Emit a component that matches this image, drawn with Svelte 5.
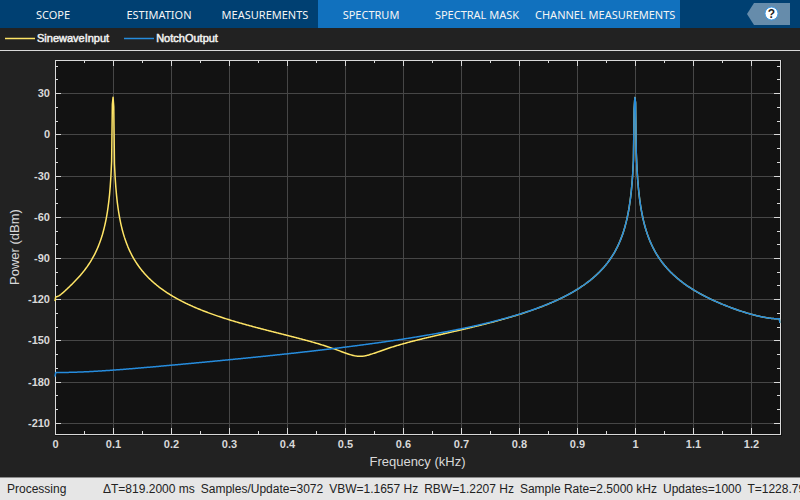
<script>
  const tabs = [
    { label: "SCOPE", contextual: false },
    { label: "ESTIMATION", contextual: false },
    { label: "MEASUREMENTS", contextual: false },
    { label: "SPECTRUM", contextual: true },
    { label: "SPECTRAL MASK", contextual: true },
    { label: "CHANNEL MEASUREMENTS", contextual: true },
  ];

  const stats = [
    "ΔT=819.2000 ms",
    "Samples/Update=3072",
    "VBW=1.1657 Hz",
    "RBW=1.2207 Hz",
    "Sample Rate=2.5000 kHz",
    "Updates=1000",
    "T=1228.7992",
  ];

  // spectrum settings, frequencies in kHz and levels in dBm
  const sampleRate = 2.5;
  const fftLength = 2048;
  const binWidth = sampleRate / fftLength;
  const peak = 27;
  const span = { min: 0, max: 1.25 };
  const range = { min: -218.1, max: 54.1 };

  const lowTone = { freq: 0.1, level: -171.3, phase: 26 };
  const highTone = { freq: 1, level: -167, phase: 42 };

  const channels = [
    { name: "SinewaveInput", kind: "input", tones: [lowTone, highTone] },
    { name: "NotchOutput", kind: "output", tones: [highTone] },
  ];

  // sidelobe envelope of the Hann window
  function kernel(offset) {
    const u = (Math.PI * offset) / sampleRate;
    return Math.cos(u) / Math.sin(u) ** 3;
  }

  function level(freq, tones) {
    let re = 0;
    let im = 0;
    for (const tone of tones) {
      // main lobe
      const bins = Math.abs(freq - tone.freq) / binWidth;
      if (bins < 1.5) return peak - 6 * bins ** 2;

      const gain = 10 ** (tone.level / 20);
      const phase = (tone.phase * Math.PI) / 180;
      const pos = kernel(freq - tone.freq);
      const neg = kernel(freq + tone.freq);
      re += gain * Math.cos(phase) * (pos + neg);
      im += gain * Math.sin(phase) * (pos - neg);
    }
    // DC and Nyquist are not doubled in a one-sided spectrum
    const edge = freq === 0 || freq === sampleRate / 2 ? 3 : 0;
    return 20 * Math.log10(Math.hypot(re, im)) - edge;
  }

  let chartWidth = $state(800);
  let chartHeight = $state(426);

  const left = 55;
  const top = 9;
  let right = $derived(chartWidth - 20);
  let bottom = $derived(chartHeight - 43);

  let x = $derived((f) => left + ((f - span.min) / (span.max - span.min)) * (right - left));
  let y = $derived((p) => top + ((range.max - p) / (range.max - range.min)) * (bottom - top));
  let snapX = $derived((f) => Math.round(x(f)) + 0.5);
  let snapY = $derived((p) => Math.round(y(p)) + 0.5);

  const xTicks = Array.from({ length: 25 }, (_, i) => ({ value: i / 20, major: i % 2 === 0 }));
  const yTicks = Array.from({ length: 27 }, (_, i) => 50 - i * 10).map((value) => ({
    value,
    major: value % 30 === 0,
  }));

  function trace(tones) {
    const points = [];
    for (let bin = 0; bin <= fftLength / 2; bin++) {
      const f = bin * binWidth;
      points.push(`${x(f).toFixed(2)},${y(level(f, tones)).toFixed(2)}`);
    }
    return points.join(" ");
  }
</script>

<main class="scope">
  <nav class="toolstrip">
    {#each tabs as tab}
      <button class="tab" class:contextual={tab.contextual}>{tab.label}</button>
    {/each}
    <button class="help" aria-label="Help">
      <svg width="43" height="22" viewBox="0 0 43 22">
        <path class="flag" d="M0 11 L7 0 H43 V22 H7 Z" />
        <circle cx="24.500" cy="10.500" r="6.500" />
        <text x="24.500" y="15" text-anchor="middle">?</text>
      </svg>
    </button>
  </nav>

  <div class="legend">
    {#each channels as channel}
      <span class="entry">
        <svg width="30" height="3"><path class="trace {channel.kind}" d="M0 1.500 H30" /></svg>
        {channel.name}
      </span>
    {/each}
  </div>

  <section class="chart" bind:clientWidth={chartWidth} bind:clientHeight={chartHeight}>
    <svg width={chartWidth} height={chartHeight} role="img" aria-label="Power spectrum">
      <rect class="plot" x={left} y={top} width={right - left + 2} height={bottom - top + 2} />

      {#each xTicks.filter((t) => t.major) as tick}
        <line class="grid" x1={snapX(tick.value)} x2={snapX(tick.value)} y1={top} y2={bottom} />
      {/each}
      {#each yTicks.filter((t) => t.major) as tick}
        <line class="grid" x1={left} x2={right} y1={snapY(tick.value)} y2={snapY(tick.value)} />
      {/each}

      <rect class="frame" x={left + 0.5} y={top + 0.5} width={right - left} height={bottom - top} />

      {#each xTicks as tick}
        {@const size = tick.major ? 6 : 3}
        <path
          class="tick"
          d="M{snapX(tick.value)} {top} v{size} M{snapX(tick.value)} {bottom} v{-size}"
        />
        {#if tick.major}
          <text class="value" x={snapX(tick.value)} y={bottom + 14} text-anchor="middle">
            {tick.value}
          </text>
        {/if}
      {/each}
      {#each yTicks as tick}
        {@const size = tick.major ? 6 : 3}
        <path
          class="tick"
          d="M{left} {snapY(tick.value)} h{size} M{right} {snapY(tick.value)} h{-size}"
        />
        {#if tick.major}
          <text class="value" x={left - 5} y={snapY(tick.value) + 3} text-anchor="end">
            {tick.value}
          </text>
        {/if}
      {/each}

      {#each channels as channel}
        <polyline class="trace {channel.kind}" points={trace(channel.tones)} />
      {/each}

      <text class="title" x={(left + right) / 2} y={bottom + 32} text-anchor="middle">
        Frequency (kHz)
      </text>
      <text
        class="title"
        transform="translate(19 {(top + bottom) / 2}) rotate(-90)"
        text-anchor="middle">Power (dBm)</text
      >
    </svg>
  </section>

  <footer class="status">
    <span class="state">Processing</span>
    {#each stats as stat}
      <span>{stat}</span>
    {/each}
  </footer>
</main>

<style>
  :global(body) {
    margin: 0;
    background: #222;
  }

  .scope {
    display: flex;
    flex-direction: column;
    height: 100vh;
    overflow: hidden;
    background: #222;
    color: #d9d9d9;
    font-family: "Liberation Sans", Arial, sans-serif;
    font-size: 12px;
  }

  .toolstrip {
    display: flex;
    flex: none;
    align-items: center;
    height: 28px;
    background: #004072;
  }

  .tab {
    min-width: 106px;
    height: 100%;
    border: 0;
    padding: 1px 5px 0;
    background: none;
    color: #f5f5f5;
    font-family: "Noto Sans", sans-serif;
    font-size: 11px;
    white-space: nowrap;
  }

  .tab.contextual {
    background: #1171be;
  }

  .help {
    display: flex;
    margin-left: auto;
    margin-right: 10px;
    border: 0;
    padding: 0;
    background: none;
  }

  .flag {
    fill: #668cab;
  }

  .help circle {
    fill: #fff;
    stroke: #3f9be6;
  }

  .help text {
    fill: #222;
    font-family: "Liberation Sans", Arial, sans-serif;
    font-size: 12px;
    font-weight: 700;
  }

  .legend {
    display: flex;
    flex: none;
    align-items: center;
    gap: 15px;
    height: 20px;
    border-bottom: 1px solid #d9d9d9;
    padding: 0 0 2px 5px;
    color: #f0f0f0;
    font-size: 11px;
    -webkit-text-stroke: 0.5px #f0f0f0;
  }

  .entry {
    display: flex;
    align-items: center;
    gap: 2px;
  }

  .input {
    stroke: #ffe566;
  }

  .output {
    stroke: #268cdd;
  }

  .chart {
    flex: 1;
    min-height: 0;
    overflow: hidden;
  }

  .chart svg {
    display: block;
  }

  .plot {
    fill: #121212;
  }

  .frame {
    fill: none;
    stroke: #d9d9d9;
  }

  .grid {
    stroke: #464646;
  }

  .tick {
    stroke: #d9d9d9;
  }

  .trace {
    fill: none;
    stroke-width: 1.5px;
    stroke-linejoin: round;
  }

  .value {
    fill: #d9d9d9;
    font-size: 11px;
    font-weight: 700;
  }

  .title {
    fill: #d9d9d9;
    font-size: 13px;
  }

  .status {
    display: flex;
    flex: none;
    align-items: center;
    gap: 6px;
    height: 22px;
    border-top: 1px solid #8c8c8c;
    padding-left: 7px;
    background: #e6e6e6;
    color: #222;
    white-space: nowrap;
  }

  .state {
    min-width: 90px;
  }
</style>
